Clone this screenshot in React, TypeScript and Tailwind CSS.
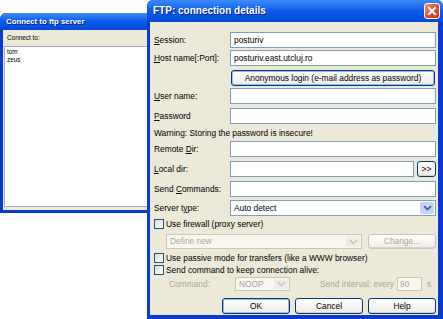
import type { ReactNode } from 'react';

const FONT = "font-['Liberation_Sans',Arial,sans-serif]";

const Acc = ({ c }: { c: string }) => <span className="underline underline-offset-[1px]">{c}</span>;

const Field = ({ value, className = '' }: { value?: string; className?: string }) => (
  <div className={`flex h-4 items-center border border-[#7F9DB9] bg-white px-[3px] text-black ${className}`}>{value}</div>
);

const Arrow = ({ disabled }: { disabled?: boolean }) => (
  <div
    className={`flex h-full w-[14px] items-center justify-center rounded-[2px] ${disabled ? 'bg-[#EEEDE5]' : 'bg-[#C1D3FB]'}`}>
    <svg width="9" height="6" viewBox="0 0 9 6">
      <path d="M1 1.2 L4.5 4.6 L8 1.2" fill="none" stroke={disabled ? '#C9C7BA' : '#4D6185'} strokeWidth="1.8" />
    </svg>
  </div>
);

const Combo = ({ value, disabled, className = '' }: { value: string; disabled?: boolean; className?: string }) => (
  <div
    className={`flex items-center justify-between border p-px pl-[3px] ${
      disabled ? 'border-[#C9C7BA] bg-[#F7F6EF] text-[#ACA899]' : 'border-[#7F9DB9] bg-white text-black'
    } ${className}`}>
    <span>{value}</span>
    <Arrow disabled={disabled} />
  </div>
);

const Button = ({ children, className = '', disabled, focus }: { children: ReactNode; className?: string; disabled?: boolean; focus?: boolean }) => (
  <div
    className={`flex items-center justify-center rounded-[3px] border ${
      disabled ? 'border-[#C9C7BA] text-[#ACA899]' : 'border-[#003C74] text-black'
    } bg-gradient-to-b from-white to-[#ECEBE6] ${focus ? 'shadow-[inset_0_0_0_1px_#9DB8EB]' : 'shadow-[inset_0_-1px_0_#D6D0C5]'} ${className}`}>
    {children}
  </div>
);

const Check = ({ children }: { children: ReactNode }) => (
  <div className="flex h-3 items-center gap-[2px]">
    <div className="h-[10px] w-[10px] border border-[#1C5180] bg-gradient-to-br from-[#DCDBD3] to-white" />
    <span>{children}</span>
  </div>
);

const Row = ({ label, children, className = '' }: { label: ReactNode; children: ReactNode; className?: string }) => (
  <div className={`flex h-4 items-center ${className}`}>
    <div className="w-[76px] shrink-0 whitespace-nowrap">{label}</div>
    <div className="flex h-full flex-1">{children}</div>
  </div>
);

const TitleBar = ({ title, h, text, close }: { title: string; h: string; text: string; close?: boolean }) => (
  <div
    className={`flex ${h} items-center justify-between rounded-t-[6px] bg-gradient-to-b from-[#3C8CFA] via-[#0A5BEA] to-[#0548D6] pl-[6px] pr-[3px]`}>
    <span className={`${text} font-bold text-white [text-shadow:1px_1px_0_#0A1E8C]`}>{title}</span>
    {close ? (
      <div className="flex h-4 w-4 items-center justify-center rounded-[3px] border border-white bg-gradient-to-br from-[#F0906C] via-[#E0542C] to-[#C23A16]">
        <svg width="10" height="10" viewBox="0 0 10 10">
          <path d="M2 2 L8 8 M8 2 L2 8" stroke="white" strokeWidth="2" strokeLinecap="square" />
        </svg>
      </div>
    ) : null}
  </div>
);

export default function App() {
  return (
    <div className={`relative h-[319px] w-[443px] overflow-hidden bg-white text-[8.4px] leading-none ${FONT}`}>
      {/* back window */}
      <div className="absolute left-0 top-[13px] flex h-[200px] w-[175px] flex-col rounded-t-[6px] border-x-[3px] border-b-[3px] border-[#0A3BD1] bg-[#0A3BD1]">
        <div className="-mx-[3px]">
          <TitleBar title="Connect to ftp server" h="h-[17px]" text="text-[7.8px]" />
        </div>
        <div className="flex flex-1 flex-col bg-[#ECE9D8] pb-[3px]">
          <div className="flex h-4 items-center pl-[4px] text-[6.4px] text-black">Connect to:</div>
          <div className="ml-px flex flex-1 flex-col border border-[#A5ACD8] bg-white pl-[2px] pt-px text-[6.4px] text-black">
            <div className="flex h-2 items-center">tom</div>
            <div className="flex h-2 items-center">zeus</div>
          </div>
        </div>
      </div>

      {/* front dialog */}
      <div className="absolute left-[147px] top-0 flex h-[319px] w-[296px] flex-col rounded-t-[6px] border-b-4 border-l-[3px] border-r-[5px] border-[#0A3BD1] bg-[#0A3BD1]">
        <div className="-ml-[3px] -mr-[5px]">
          <TitleBar title="FTP: connection details" h="h-[22px]" text="text-[10px]" close />
        </div>
        <div className="flex flex-1 flex-col bg-[#ECE9D8] pl-[4px] pr-[2px] text-black">
          <Row className="mt-[10px]" label={<><Acc c="S" />ession:</>}>
            <Field value="posturiv" className="flex-1" />
          </Row>
          <Row className="mt-[2px]" label={<><Acc c="H" />ost name[:Port]:</>}>
            <Field value="posturiv.east.utcluj.ro" className="flex-1" />
          </Row>
          <Row className="mt-[4px]" label="">
            <Button focus className="ml-px mr-px flex-1">Anonymous login (e-mail address as password)</Button>
          </Row>
          <Row className="mt-[2px]" label={<><Acc c="U" />ser name:</>}>
            <Field className="flex-1" />
          </Row>
          <Row className="mt-[4px]" label={<><Acc c="P" />assword</>}>
            <Field className="flex-1" />
          </Row>
          <div className="mt-[2px] flex h-[14px] items-center">Warning: Storing the password is insecure!</div>
          <Row className="mt-px" label={<>Remote <Acc c="D" />ir:</>}>
            <Field className="flex-1" />
          </Row>
          <Row className="mt-[4px]" label={<><Acc c="L" />ocal dir:</>}>
            <Field className="flex-1" />
            <Button className="ml-[3px] w-[19px]">&gt;&gt;</Button>
          </Row>
          <Row className="mt-[4px]" label={<>Send <Acc c="C" />ommands:</>}>
            <Field className="flex-1" />
          </Row>
          <Row className="mt-[3px]" label={<>Server t<Acc c="y" />pe:</>}>
            <Combo value="Auto detect" className="flex-1" />
          </Row>
          <div className="mt-[2px]">
            <Check>Use firewall (proxy server)</Check>
          </div>
          <div className="mt-[4px] flex h-[15px] pl-[12px]">
            <Combo value="Define new" disabled className="w-[196px]" />
            <Button disabled className="ml-[6px] flex-1">Change...</Button>
          </div>
          <div className="mt-[3px]">
            <Check>Use passive mode for transfers (like a WWW browser)</Check>
          </div>
          <div className="mt-0">
            <Check>Send command to keep connection alive:</Check>
          </div>
          <div className="mt-px flex h-[14px] items-center text-[#ACA899]">
            <span className="w-[81px] pl-[15px]">Command:</span>
            <Combo value="NOOP" disabled className="h-full w-[55px]" />
            <span className="flex-1 pr-[3px] text-right">Send interval: every</span>
            <div className="flex h-full w-[25px] items-center border border-[#C9C7BA] bg-[#F7F6EF] pl-[2px]">90</div>
            <span className="w-[14px] pl-[5px]">s</span>
          </div>
          <div className="mt-[7px] flex h-4 justify-end gap-[5px]">
            <Button focus className="w-[68px]">OK</Button>
            <Button className="w-[68px]">Cancel</Button>
            <Button className="w-[68px]">Help</Button>
          </div>
        </div>
      </div>
    </div>
  );
}
